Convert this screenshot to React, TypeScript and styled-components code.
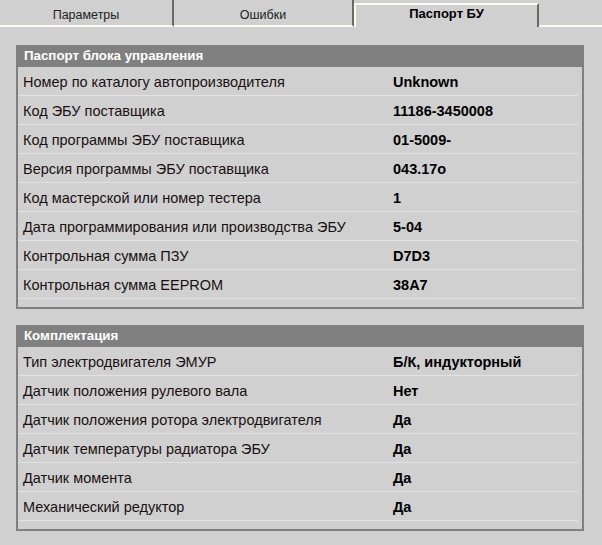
import React from 'react'
import styled, { createGlobalStyle } from 'styled-components'

const GlobalStyle = createGlobalStyle`
  html, body {
    margin: 0;
    padding: 0;
    background: #d0d0d0;
  }
  body {
    font-family: "Liberation Sans", Arial, sans-serif;
    color: #111;
  }
`

const Page = styled.div`
  width: 602px;
  height: 545px;
  background: #d0d0d0;
  overflow: hidden;
`

const TabBar = styled.div`
  display: flex;
  height: 27px;
  align-items: flex-end;
`

const Tab = styled.div<{ $active?: boolean; $width: number }>`
  box-sizing: border-box;
  width: ${(p) => p.$width}px;
  flex-shrink: 0;
  height: ${(p) => (p.$active ? 24 : 27)}px;
  display: flex;
  align-items: center;
  justify-content: center;
  font-size: ${(p) => (p.$active ? 13 : 12.5)}px;
  font-weight: ${(p) => (p.$active ? 'bold' : 'normal')};
  color: ${(p) => (p.$active ? '#000' : '#222')};
  border-right: 2px solid #6a6a62;
  border-left: ${(p) => (p.$active ? '2px solid #fafaf0' : 'none')};
  border-top: ${(p) => (p.$active ? '2px solid #fafaf0' : 'none')};
  border-bottom: ${(p) => (p.$active ? 'none' : '2px solid #fafaf0')};
  padding-bottom: ${(p) => (p.$active ? 6 : 0)}px;
  padding-top: ${(p) => (p.$active ? 0 : 4)}px;
`

const TabFiller = styled.div`
  flex: 1;
  height: 27px;
  box-sizing: border-box;
  border-bottom: 2px solid #fafaf0;
`

const Content = styled.div`
  display: flex;
  flex-direction: column;
  gap: 16px;
  padding: 18px 18px 0 16px;
`

const Panel = styled.section`
  border: 2px solid #808080;
  border-top: none;
`

const PanelHeader = styled.div`
  box-sizing: border-box;
  height: 22px;
  padding: 0 0 2px 6px;
  background: #808080;
  color: #fff;
  font-size: 13.3px;
  font-weight: bold;
  display: flex;
  align-items: center;
`

const PanelBody = styled.div`
  padding: 0 4px 8px 0;
`

const Row = styled.div`
  box-sizing: border-box;
  display: flex;
  align-items: center;
  height: 29px;
  padding-top: 1px;
  border-bottom: 1px solid #e2e2e2;
  font-size: 14.5px;
`

const Label = styled.div`
  width: 370px;
  padding-left: 5px;
  color: #1a1010;
`

const Value = styled.div`
  font-weight: bold;
  color: #000;
`

const passport: [string, string][] = [
  ['Номер по каталогу автопроизводителя', 'Unknown'],
  ['Код ЭБУ поставщика', '11186-3450008'],
  ['Код программы ЭБУ поставщика', '01-5009-'],
  ['Версия программы ЭБУ поставщика', '043.17о'],
  ['Код мастерской или номер тестера', '1'],
  ['Дата программирования или производства ЭБУ', '5-04'],
  ['Контрольная сумма ПЗУ', 'D7D3'],
  ['Контрольная сумма EEPROM', '38A7'],
]

const equipment: [string, string][] = [
  ['Тип электродвигателя ЭМУР', 'Б/К, индукторный'],
  ['Датчик положения рулевого вала', 'Нет'],
  ['Датчик положения ротора электродвигателя', 'Да'],
  ['Датчик температуры радиатора ЭБУ', 'Да'],
  ['Датчик момента', 'Да'],
  ['Механический редуктор', 'Да'],
]

function InfoPanel({ title, rows }: { title: string; rows: [string, string][] }) {
  return (
    <Panel>
      <PanelHeader>{title}</PanelHeader>
      <PanelBody>
        {rows.map(([label, value]) => (
          <Row key={label}>
            <Label>{label}</Label>
            <Value>{value}</Value>
          </Row>
        ))}
      </PanelBody>
    </Panel>
  )
}

export default function App() {
  return (
    <Page>
      <GlobalStyle />
      <TabBar>
        <Tab $width={174}>Параметры</Tab>
        <Tab $width={180}>Ошибки</Tab>
        <Tab $width={185} $active>
          Паспорт БУ
        </Tab>
        <TabFiller />
      </TabBar>
      <Content>
        <InfoPanel title="Паспорт блока управления" rows={passport} />
        <InfoPanel title="Комплектация" rows={equipment} />
      </Content>
    </Page>
  )
}
